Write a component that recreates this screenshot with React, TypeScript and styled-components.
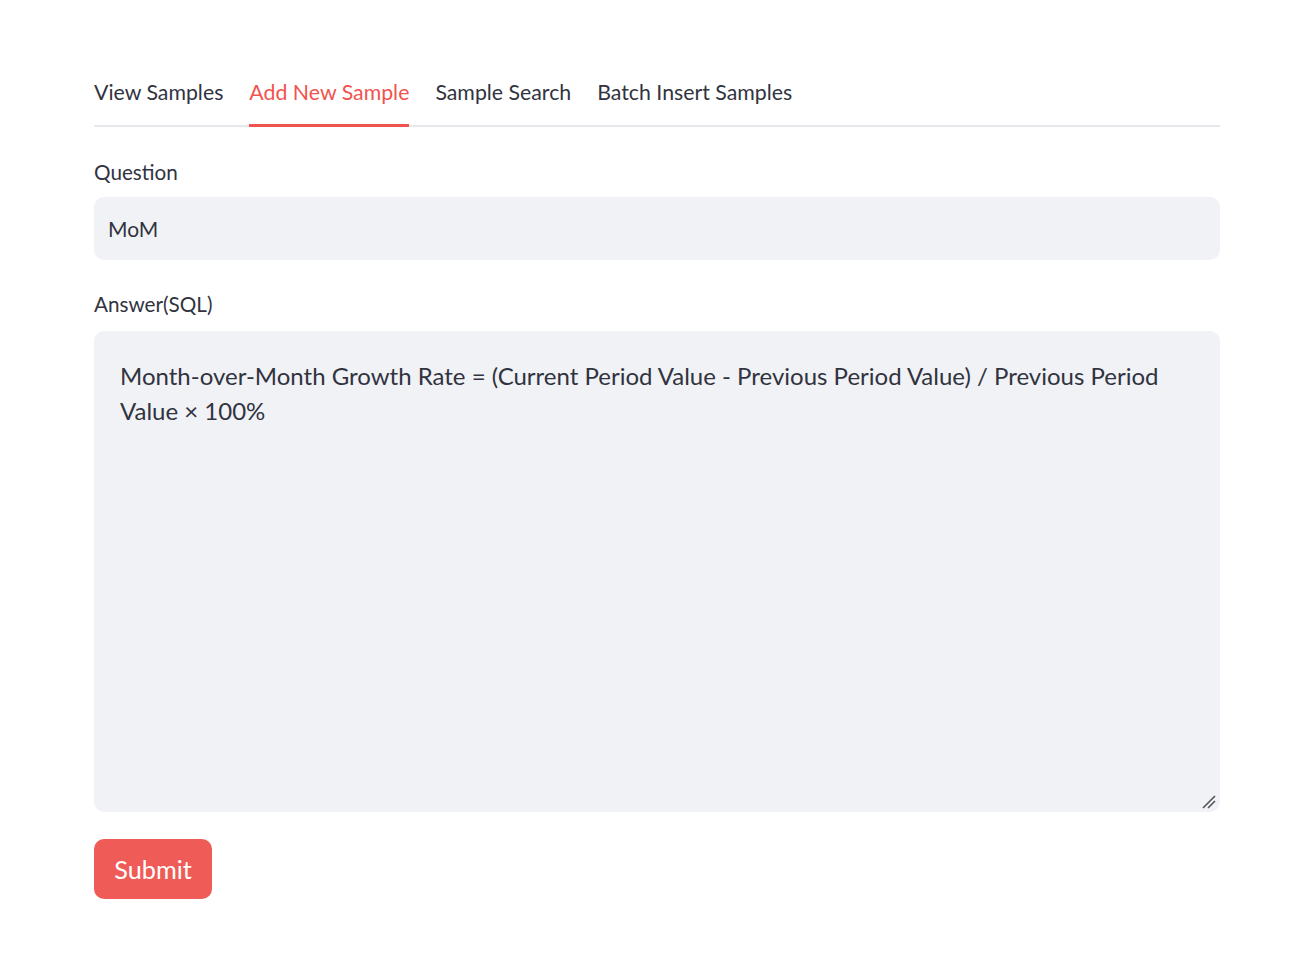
import React from "react";
import styled, { createGlobalStyle } from "styled-components";

const Global = createGlobalStyle`
  html, body { margin: 0; padding: 0; background: #ffffff; }
  body { font-family: "Lato", "Noto Sans", sans-serif; color: #31333f; }
  * { box-sizing: border-box; }
`;

const Page = styled.div`
  width: 1296px;
  min-height: 974px;
  padding: 70px 76px 0 94px;
  display: flex;
  flex-direction: column;
`;

const TabList = styled.div`
  display: flex;
  gap: 26px;
  border-bottom: 2px solid #e8e8ec;
`;

const Tab = styled.div<{ $active?: boolean }>`
  font-size: 21.3px;
  line-height: 26px;
  padding: 9px 0 19px;
  margin-bottom: -2px;
  color: ${(p) => (p.$active ? "#f0544f" : "#31333f")};
  border-bottom: 3px solid ${(p) => (p.$active ? "#f0544f" : "transparent")};
  white-space: nowrap;
`;

const Field = styled.div<{ $top: number }>`
  display: flex;
  flex-direction: column;
  margin-top: ${(p) => p.$top}px;
`;

const Label = styled.label<{ $gap: number }>`
  font-size: 20.7px;
  line-height: 26px;
  margin-bottom: ${(p) => p.$gap}px;
`;

const Input = styled.div`
  height: 63px;
  background: #f0f2f6;
  border-radius: 10px;
  display: flex;
  align-items: center;
  padding: 0 14px;
  font-size: 21px;
`;

const TextArea = styled.div`
  position: relative;
  height: 481px;
  background: #f0f2f6;
  border-radius: 10px;
  padding: 27px 26px;
  font-size: 24px;
  line-height: 35px;
`;

const Grip = styled.svg`
  position: absolute;
  right: 4px;
  bottom: 3px;
`;

const Button = styled.button`
  margin-top: 27px;
  align-self: flex-start;
  width: 118px;
  height: 60px;
  border: none;
  border-radius: 10px;
  background: #ef5b56;
  color: #ffffff;
  font-family: inherit;
  font-size: 25.3px;
  cursor: pointer;
`;

export default function App() {
  return (
    <>
      <Global />
      <Page>
        <TabList>
          <Tab>View Samples</Tab>
          <Tab $active>Add New Sample</Tab>
          <Tab>Sample Search</Tab>
          <Tab>Batch Insert Samples</Tab>
        </TabList>
        <Field $top={32}>
          <Label $gap={12}>Question</Label>
          <Input>MoM</Input>
        </Field>
        <Field $top={31}>
          <Label $gap={14}>Answer(SQL)</Label>
          <TextArea>
            Month-over-Month Growth Rate = (Current Period Value - Previous Period Value) / Previous Period Value × 100%
            <Grip width="14" height="14" viewBox="0 0 14 14">
              <path d="M1 13 L13 1 M6 13 L13 6" stroke="#555" strokeWidth="1.6" />
            </Grip>
          </TextArea>
        </Field>
        <Button>Submit</Button>
      </Page>
    </>
  );
}
